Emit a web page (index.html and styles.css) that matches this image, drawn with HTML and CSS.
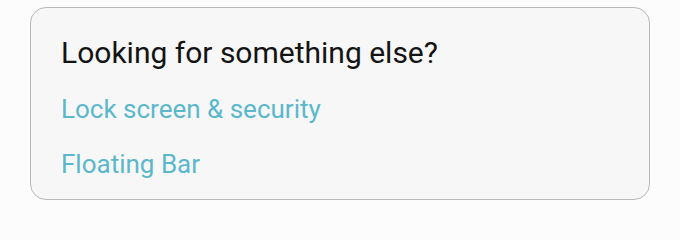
FILE: index.html
```html
<!DOCTYPE html>
<html>
<head>
<meta charset="utf-8">
<link rel="stylesheet" href="styles.css">
</head>
<body>
<div class="card">
  <div class="title">Looking for something else?</div>
  <a class="link">Lock screen &amp; security</a>
  <a class="link">Floating Bar</a>
</div>
</body>
</html>
```
FILE: styles.css
```css
html, body {
  margin: 0;
  padding: 0;
  background: #fcfcfc;
}
body {
  padding: 7px 30px 0 30px;
  font-family: Roboto, "Noto Sans", sans-serif;
}
.card {
  box-sizing: border-box;
  width: 620px;
  height: 193px;
  border: 1.5px solid #b9b9b9;
  border-radius: 16px;
  background: #f7f7f7;
  padding: 27px 30px 0 30px;
  display: flex;
  flex-direction: column;
}
.title {
  font-size: 30px;
  line-height: 36px;
  color: #141414;
}
.link {
  font-size: 26px;
  line-height: 30px;
  color: #5bb8cb;
  margin-top: 23px;
}
.link + .link {
  margin-top: 25px;
}
```
